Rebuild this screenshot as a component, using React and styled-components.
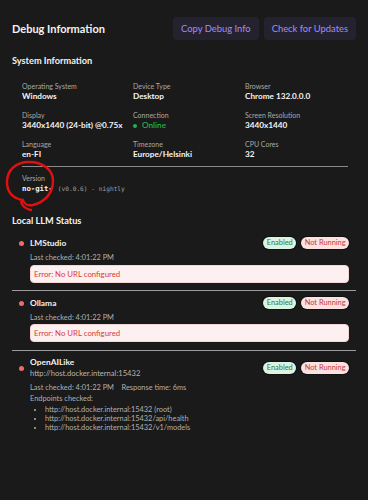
import React from "react";
import styled, { createGlobalStyle } from "styled-components";

const Global = createGlobalStyle`
  html, body { margin: 0; padding: 0; background: #1a1a1a; }
  body { font-family: Lato, "Noto Sans", sans-serif; color: #f2f2f2; }
`;

const sysInfo = [
  ["Operating System", "Windows"],
  ["Device Type", "Desktop"],
  ["Browser", "Chrome 132.0.0.0"],
  ["Display", "3440x1440 (24-bit) @0.75x"],
  ["Connection", "online"],
  ["Screen Resolution", "3440x1440"],
  ["Language", "en-FI"],
  ["Timezone", "Europe/Helsinki"],
  ["CPU Cores", "32"],
];

const Page = styled.div`
  position: relative;
  width: 368px;
  height: 500px;
  box-sizing: border-box;
  padding: 17px 12px 0 12px;
  background: #1a1a1a;
  overflow: hidden;
`;

const Header = styled.div`
  display: flex;
  align-items: center;
  justify-content: space-between;
`;

const Title = styled.h1`
  margin: 0;
  font-size: 11px;
  font-weight: 700;
`;

const Actions = styled.div`
  display: flex;
  gap: 5px;
`;

const Button = styled.button`
  height: 23px;
  padding: 0 8px;
  border: none;
  border-radius: 4px;
  background: #25222f;
  color: #a48cf5;
  font-family: inherit;
  font-size: 9.4px;
  cursor: pointer;
`;

const Section = styled.h2`
  margin: ${(p) => p.$top}px 0 0 0;
  font-size: 9.2px;
  font-weight: 700;
  line-height: 12px;
`;

const Grid = styled.div`
  display: grid;
  grid-template-columns: 111px 112px 1fr;
  row-gap: 9px;
  margin: 14.5px 0 0 10px;
`;

const Field = styled.div`
  display: flex;
  flex-direction: column;
`;

const Label = styled.span`
  font-size: 7px;
  color: #a9a9a9;
  line-height: 9px;
  margin-top: ${(p) => p.$top || 0}px;
`;

const Value = styled.span`
  font-size: 8.2px;
  font-weight: 700;
  line-height: 11px;
  color: #f4f4f4;
  white-space: nowrap;
`;

const Online = styled.span`
  color: #22b14c;
  font-weight: 600;
  display: inline-flex;
  align-items: center;
  gap: 5px;
  &::before {
    content: "";
    width: 4px;
    height: 4px;
    border-radius: 50%;
    background: #22b14c;
  }
`;

const Rule = styled.hr`
  border: none;
  height: 1px;
  background: ${(p) => (p.$light ? "#9a9a9a" : "#8a8a8a")};
  margin: ${(p) => p.$m};
`;

const Version = styled.div`
  margin-left: 10px;
  display: flex;
  flex-direction: column;
`;

const Mono = styled.span`
  font-family: "DejaVu Sans Mono", "Liberation Mono", monospace;
  font-size: ${(p) => (p.$small ? "6.2px" : "7.3px")};
  font-weight: ${(p) => (p.$small ? 400 : 700)};
  color: ${(p) => (p.$small ? "#a0a0a0" : "#f4f4f4")};
`;

const VersionLine = styled.div`
  display: flex;
  align-items: baseline;
  gap: 5px;
  line-height: 11px;
`;

const Item = styled.div`
  padding: ${(p) => p.$pad};
`;

const ItemHead = styled.div`
  display: flex;
  align-items: center;
  justify-content: space-between;
  padding: 0 7px 0 7px;
`;

const NameBox = styled.div`
  display: flex;
  align-items: center;
  gap: 6px;
`;

const Dot = styled.span`
  width: 5px;
  height: 5px;
  border-radius: 50%;
  background: #ef6a6a;
`;

const Name = styled.div`
  display: flex;
  flex-direction: column;
  font-size: 8.4px;
  font-weight: 700;
  line-height: 11px;
`;

const Url = styled.span`
  font-size: 7.6px;
  font-weight: 400;
  color: #b5b5b5;
  line-height: 11px;
`;

const Badges = styled.div`
  display: flex;
  gap: 5px;
`;

const Badge = styled.span`
  height: 12px;
  padding: 0 3.5px;
  border-radius: 7px;
  font-size: 7.4px;
  line-height: 12px;
  background: ${(p) => (p.$ok ? "#dcf3e2" : "#fbe1e1")};
  color: ${(p) => (p.$ok ? "#2b7a44" : "#c43a3a")};
  box-shadow: 0 0 0 1px #111;
`;

const Body = styled.div`
  margin-left: 18px;
  margin-right: 7px;
  display: flex;
  flex-direction: column;
`;

const Meta = styled.div`
  font-size: 7.4px;
  color: #b0b0b0;
  line-height: ${(p) => (p.$tall ? 11 : 10)}px;
  margin-top: ${(p) => p.$top || 0}px;
  white-space: pre;
`;

const ErrorBox = styled.div`
  margin-top: ${(p) => p.$top}px;
  height: 18px;
  border-radius: 4px;
  background: #fdf0f0;
  border: 1px solid #f6d5d5;
  box-sizing: border-box;
  padding: 0 3px;
  font-size: 7.8px;
  line-height: 16px;
  color: #d93a3a;
`;

const List = styled.ul`
  margin: 1px 0 0 0;
  padding-left: 15px;
  list-style: disc;
  font-size: 7.4px;
  line-height: 9px;
  color: #b0b0b0;
  li::marker { font-size: 6px; }
`;

const Annotation = styled.svg`
  position: absolute;
  left: 0;
  top: 155px;
  pointer-events: none;
`;

const Provider = ({ name, url, extra, errTop = 2 }) => (
  <>
    <ItemHead>
      <NameBox>
        <Dot />
        <Name>
          {name}
          {url && <Url>{url}</Url>}
        </Name>
      </NameBox>
      <Badges>
        <Badge $ok>Enabled</Badge>
        <Badge>Not Running</Badge>
      </Badges>
    </ItemHead>
    <Body>
      {extra ? (
        <>
          <Meta $tall $top={3}>{"Last checked: 4:01:22 PM    Response time: 6ms"}</Meta>
          <Meta $tall>Endpoints checked:</Meta>
          <List>
            <li>http://host.docker.internal:15432 (root)</li>
            <li>http://host.docker.internal:15432/api/health</li>
            <li>http://host.docker.internal:15432/v1/models</li>
          </List>
        </>
      ) : (
        <>
          <Meta $top={4}>Last checked: 4:01:22 PM</Meta>
          <ErrorBox $top={errTop}>Error: No URL configured</ErrorBox>
        </>
      )}
    </Body>
  </>
);

export default function App() {
  return (
    <Page>
      <Global />
      <Header>
        <Title>Debug Information</Title>
        <Actions>
          <Button>Copy Debug Info</Button>
          <Button>Check for Updates</Button>
        </Actions>
      </Header>

      <Section $top={15}>System Information</Section>
      <Grid>
        {sysInfo.map(([k, v]) => (
          <Field key={k}>
            <Label>{k}</Label>
            <Value>{v === "online" ? <Online>Online</Online> : v}</Value>
          </Field>
        ))}
      </Grid>

      <Rule $m="6px 8px 0 10px" />
      <Version>
        <Label $top={7}>Version</Label>
        <VersionLine>
          <Mono>no-git-</Mono>
          <Mono $small>(v0.0.6) - nightly</Mono>
        </VersionLine>
      </Version>

      <Section $top={21}>Local LLM Status</Section>

      <Item $pad="10px 0 0 0">
        <Provider name="LMStudio" />
      </Item>
      <Rule $light $m="7px 0 0 0" />
      <Item $pad="6px 0 0 0">
        <Provider name="Ollama" errTop={1} />
      </Item>
      <Rule $light $m="8px 0 0 0" />
      <Item $pad="6px 0 0 0">
        <Provider name="OpenAILike" url="http://host.docker.internal:15432" extra />
      </Item>

      <Annotation width="70" height="60" viewBox="0 0 70 60">
        <path
          d="M31 55 C23 53 20 48 22 45 C13 43 7 37 7 27 C7 15 16 7 29 7 C42 7 53 14 53 26 C53 38 45 47 33 50 C28 51 24 49 23 45"
          fill="none"
          stroke="#e01010"
          strokeWidth="2.4"
          strokeLinecap="round"
          strokeLinejoin="round"
        />
      </Annotation>
    </Page>
  );
}
